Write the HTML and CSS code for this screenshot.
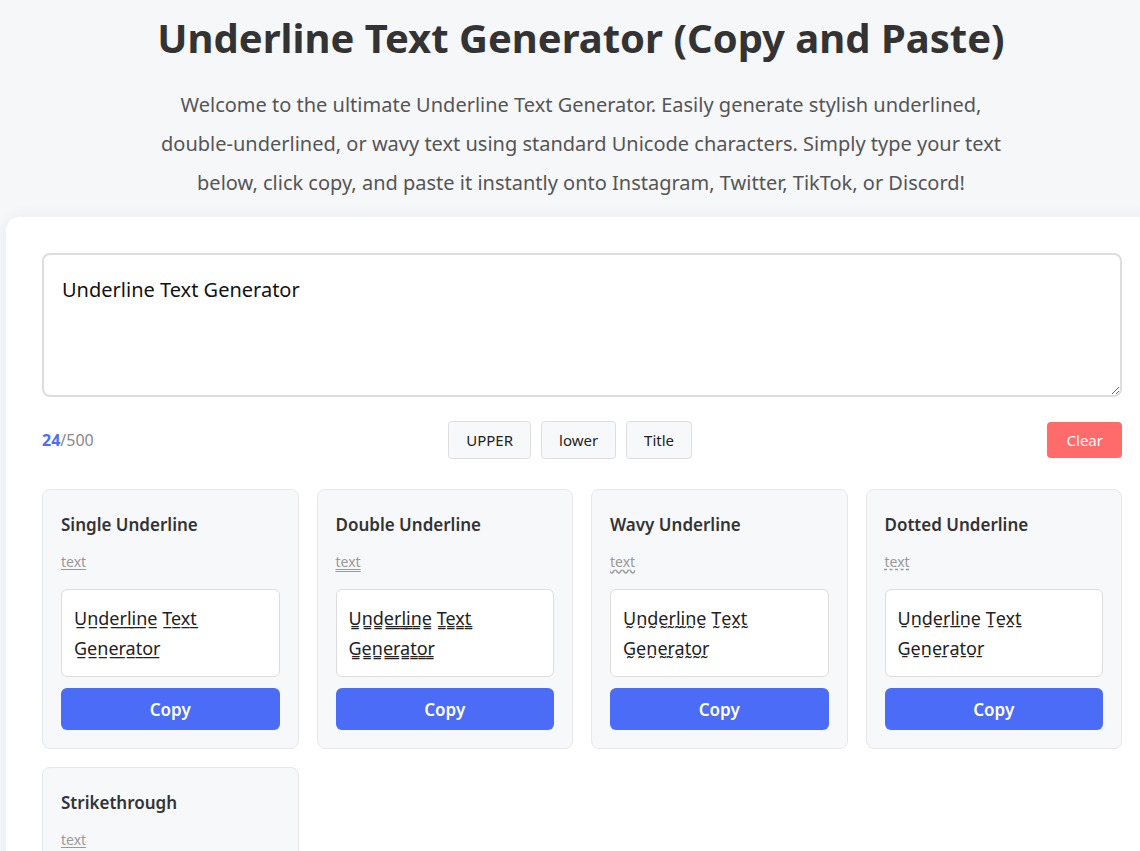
FILE: index.html
```html
<!doctype html>
<html lang="en">
	<head>
		<meta charset="utf-8">
		<title>Underline Text Generator (Copy and Paste)</title>
		<link rel="stylesheet" href="styles.css">
	</head>
	<body>
		<header class="intro">
			<h1>Underline Text Generator (Copy and Paste)</h1>
			<p>Welcome to the ultimate Underline Text Generator. Easily generate stylish underlined, double-underlined, or wavy text using standard Unicode characters. Simply type your text below, click copy, and paste it instantly onto Instagram, Twitter, TikTok, or Discord!</p>
		</header>

		<main class="panel">
			<textarea class="source" maxlength="500">Underline Text Generator</textarea>

			<div class="toolbar">
				<div class="counter"><b>24</b>/500</div>
				<div class="case-buttons">
					<button class="case-btn">UPPER</button>
					<button class="case-btn">lower</button>
					<button class="case-btn">Title</button>
				</div>
				<button class="clear-btn">Clear</button>
			</div>

			<div class="styles-grid">
				<div class="style-card">
					<h3>Single Underline</h3>
					<div class="sample single">text</div>
					<div class="output">U̲n̲d̲e̲r̲l̲i̲n̲e̲ T̲e̲x̲t̲ G̲e̲n̲e̲r̲a̲t̲o̲r̲</div>
					<button class="copy-btn">Copy</button>
				</div>
				<div class="style-card">
					<h3>Double Underline</h3>
					<div class="sample double">text</div>
					<div class="output">U̳n̳d̳e̳r̳l̳i̳n̳e̳ T̳e̳x̳t̳ G̳e̳n̳e̳r̳a̳t̳o̳r̳</div>
					<button class="copy-btn">Copy</button>
				</div>
				<div class="style-card">
					<h3>Wavy Underline</h3>
					<div class="sample wavy">text</div>
					<div class="output">Ṵn̰d̰ḛr̰l̰ḭn̰ḛ T̰ḛx̰t̰ G̰ḛn̰ḛr̰a̰t̰o̰r̰</div>
					<button class="copy-btn">Copy</button>
				</div>
				<div class="style-card">
					<h3>Dotted Underline</h3>
					<div class="sample dotted">text</div>
					<div class="output">U̱ṉḏe̱ṟḻi̱ṉe̱ Ṯe̱x̱ṯ G̱e̱ṉe̱ṟa̱ṯo̱ṟ</div>
					<button class="copy-btn">Copy</button>
				</div>
				<div class="style-card">
					<h3>Strikethrough</h3>
					<div class="sample strike">text</div>
					<div class="output">U̶n̶d̶e̶r̶l̶i̶n̶e̶ T̶e̶x̶t̶ G̶e̶n̶e̶r̶a̶t̶o̶r̶</div>
					<button class="copy-btn">Copy</button>
				</div>
			</div>
		</main>
	</body>
</html>
```

FILE: styles.css
```css
html, body {
	margin: 0;
	padding: 0;
}
body {
	background: #f6f7f9;
	color: #333;
	font-family: "Noto Sans", "Open Sans", sans-serif;
	overflow-x: hidden;
}

.intro {
	text-align: center;
	padding: 14px 0 0 22px;
}
.intro h1 {
	font-size: 40px;
	line-height: 48px;
	font-weight: 700;
	margin: 0;
	color: #333;
}
.intro p {
	max-width: 850px;
	margin: 23px auto 0;
	font-size: 20px;
	line-height: 39px;
	color: #555;
}

.panel {
	display: block;
	width: 1080px;
	margin: 15px 0 0 6px;
	padding: 36px;
	background: #fff;
	border-radius: 14px;
	box-shadow: 0 0 18px rgba(0, 0, 0, .05);
}

.source {
	display: block;
	box-sizing: border-box;
	width: 100%;
	height: 144px;
	padding: 21px 18px;
	border: 2px solid #ddd;
	border-radius: 8px;
	font-family: inherit;
	font-size: 20px;
	color: #111;
	resize: vertical;
}

.toolbar {
	display: flex;
	justify-content: space-between;
	align-items: center;
	margin: 24px 0 30px;
}
.counter {
	font-size: 16px;
	color: #888;
}
.counter b {
	color: #4c6ef5;
}
.case-buttons {
	display: flex;
	gap: 10px;
}
.case-btn {
	font-family: inherit;
	font-size: 15px;
	height: 38px;
	padding: 0 17px;
	background: #f7f8fa;
	border: 1px solid #ddd;
	border-radius: 4px;
	color: #222;
}
.clear-btn {
	font-family: inherit;
	font-size: 15px;
	height: 36px;
	padding: 0 19px 0 20px;
	background: #ff6b6b;
	border: none;
	border-radius: 4px;
	color: #fff;
}

.styles-grid {
	display: grid;
	grid-template-columns: repeat(4, 1fr);
	gap: 18px;
}
.style-card {
	background: #f7f8fa;
	border: 1px solid #e6e8eb;
	border-radius: 8px;
	padding: 18px;
}
.style-card h3 {
	margin: 0;
	font-size: 17px;
	line-height: 34px;
	font-weight: 600;
	color: #333;
}
.sample {
	display: inline-block;
	margin: 10px 0 17px;
	font-size: 14px;
	line-height: 20px;
	color: #999;
	text-decoration: underline;
	text-underline-offset: 2px;
}
.sample.double { text-decoration-style: double; }
.sample.wavy { text-decoration-style: wavy; }
.sample.dotted { text-decoration-style: dashed; }

.output {
	background: #fff;
	border: 1px solid #ddd;
	border-radius: 6px;
	padding: 13px 12px;
	font-size: 18px;
	line-height: 30px;
	color: #222;
	min-height: 60px;
}
.copy-btn {
	display: block;
	width: 100%;
	height: 42px;
	margin-top: 11px;
	background: #4a6cf7;
	border: none;
	border-radius: 6px;
	color: #fff;
	font-family: inherit;
	font-size: 17px;
	font-weight: 600;
}
```
